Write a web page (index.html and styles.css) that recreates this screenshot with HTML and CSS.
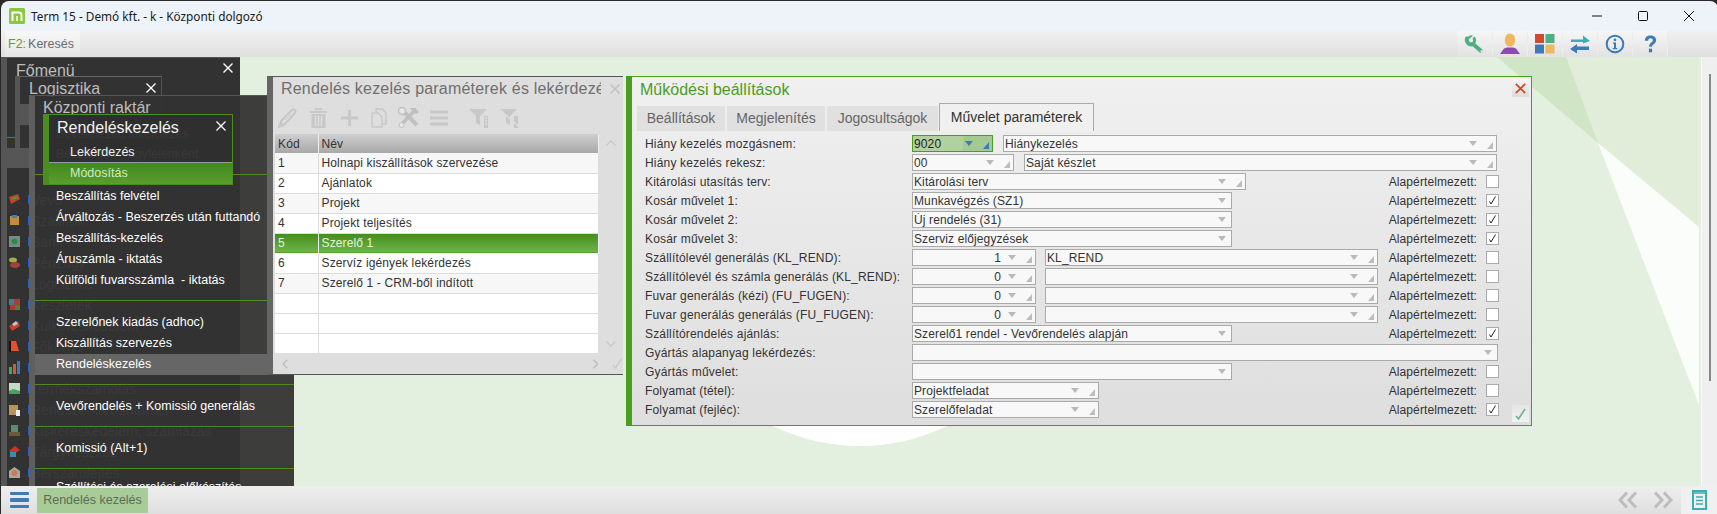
FILE: index.html
```html
<!DOCTYPE html>
<html lang="hu">
<head>
<meta charset="utf-8">
<title>Term 15 - Demó kft. - k - Központi dolgozó</title>
<link rel="stylesheet" href="styles.css">
</head>
<body>
<div class="app">
  <header class="titlebar">
    <svg class="logo" viewBox="0 0 16 16"><rect width="16" height="16" rx="1.5" fill="#8cc63f"/><path d="M3.500 13V4.500H10a2.500 2.500 0 0 1 2.500 2.500v6" fill="none" stroke="#fff" stroke-width="2"/><path d="M8 8v5" fill="none" stroke="#fff" stroke-width="1.500"/></svg>
    <span class="title-text">Term 15 - Demó kft. - k - Központi dolgozó</span>
    <div class="winbtns">
      <svg class="winbtn" viewBox="0 0 46 30"><path d="M13 15h10" stroke="#111" stroke-width="1"/></svg>
      <svg class="winbtn" viewBox="0 0 46 30"><rect x="13.5" y="10.5" width="9" height="9" rx="1" fill="none" stroke="#111"/></svg>
      <svg class="winbtn" viewBox="0 0 46 30"><path d="M13 10l10 10M23 10L13 20" stroke="#111" stroke-width="1"/></svg>
    </div>
  </header>

  <div class="toolbar">
    <div class="search"><span class="f2">F2:</span><span class="search-label">Keresés</span></div>
    <div class="tools">
      <div class="tool"><svg viewBox="0 0 22 20" width="22" height="20"><path d="M3 4.500a4.500 4.500 0 0 0 6 5.500l7.500 6.500" fill="none" stroke="#4fae84" stroke-width="4" stroke-linecap="round"/><path d="M9 1.500L6 4.500l-3 0a4.500 4.500 0 0 1 6-3z" fill="#4fae84"/><path d="M9.500 3.500a4 4 0 0 1-.5 6" fill="none" stroke="#4fae84" stroke-width="3"/><circle cx="17.500" cy="17" r="1" fill="#dff0e6"/></svg></div>
      <div class="tool"><svg viewBox="0 0 22 22" width="22" height="22"><ellipse cx="11" cy="7" rx="5.200" ry="6.600" fill="#efb75f"/><path d="M1 21l4-5.500 3-1h6l3 1 4 5.500z" fill="#8e4bae"/></svg></div>
      <div class="tool"><svg viewBox="0 0 20 20" width="20" height="20"><rect width="9" height="9" fill="#d04a2c"/><rect x="10.500" width="9" height="9" fill="#4fae84"/><rect y="10.500" width="9" height="9" fill="#3d7ab8"/><rect x="10.500" y="10.500" width="9" height="9" fill="#efb75f"/></svg></div>
      <div class="tool"><svg viewBox="0 0 22 20" width="22" height="20"><path d="M2 5.500h12V1.500l7 5.500-7 2.500V8H2z" fill="#3aaeb0"/><path d="M20 12.500H8V10l-7 5 7 4.500V16h12z" fill="#3d7ab8"/></svg></div>
      <div class="tool"><svg viewBox="0 0 20 20" width="20" height="20"><circle cx="10" cy="10" r="8.300" fill="none" stroke="#3d7ab8" stroke-width="2"/><circle cx="10" cy="5.800" r="1.400" fill="#3d7ab8"/><path d="M8 8.500h3v5.500h1.200v1.300H7.800V14H9V9.800H8z" fill="#3d7ab8"/></svg></div>
      <div class="tool"><svg viewBox="0 0 16 20" width="15" height="20"><path d="M2 6.500C2 3 4.500 1 8 1s6 2 6 5c0 4-4.500 4-4.500 7h-3c0-4.500 4-4.500 4-7 0-1.200-1-2.200-2.500-2.200S5.500 4.800 5.500 6.500z" fill="#3d7ab8"/><rect x="6.300" y="15" width="3.400" height="3.800" fill="#3d7ab8"/></svg></div>
    </div>
  </div>

  <main class="desktop">
    <svg class="wallpaper" viewBox="0 0 1699 428" preserveAspectRatio="none">
      <path d="M1566 0H1699V170L1598 86z" fill="#e1edd9"/>
      <path d="M1497 0H1566L1598 86z" fill="#cfe5c5"/>
      <path d="M1598 86L1699 170V348z" fill="#fbfdfa"/>
      <path d="M773 369a199 199 0 0 0 174 0z" fill="#ffffff"/>
    </svg>
    <div class="sidebar-strip"><div class="sidebar-thumb"></div></div>

    <!-- Főmenü -->
    <section class="menuwin win-fo">
      <div class="menuhead"><span>Főmenü</span><svg class="x" viewBox="0 0 10 10"><path d="M.5.5l9 9M9.500.5l-9 9" stroke="#fff" stroke-width="1.400"/></svg></div>
      <div class="win-fo-line"></div>
      <ul class="rootlist">
        <li><svg viewBox="0 0 13 13"><path d="M1 4l9-3 2 5-9 5z" fill="#c8402a"/><path d="M3 5l6-2 1 2-6 2z" fill="#4a9e3a"/></svg><b></b>Vevő</li>
        <li><svg viewBox="0 0 13 13"><rect x="2" y="2" width="9" height="9" fill="#c98a35"/><rect x="4" y="1" width="5" height="3" fill="#4a7fa8"/></svg><b></b>Szállítók</li>
        <li><svg viewBox="0 0 13 13"><rect x="1" y="1" width="11" height="11" fill="#7b8a88"/><circle cx="6.500" cy="6.500" r="3" fill="#2c8a48"/></svg><b></b>Bank</li>
        <li><svg viewBox="0 0 13 13"><ellipse cx="5" cy="4" rx="4" ry="2.500" fill="#a8a848"/><ellipse cx="7" cy="9" rx="5" ry="3" fill="#a84040"/></svg><b></b>Pénzügy</li>
        <li><span class="noicon"></span><b></b>Logisztika</li>
        <li><svg viewBox="0 0 13 13"><rect x="1" y="1" width="5" height="6" fill="#4a7a9a"/><rect x="6" y="1" width="6" height="6" fill="#a04040"/><rect x="2" y="7" width="5" height="5" fill="#c03030"/><rect x="7" y="7" width="5" height="5" fill="#5a7a3a"/></svg><b></b>Készletek</li>
        <li><svg viewBox="0 0 13 13"><path d="M1 7l9-5 2 5-8 5z" fill="#c8402a"/><path d="M4 5l4-3 2 3-4 2z" fill="#b8c8e0"/></svg><b></b>Külkereskedelem</li>
        <li><svg viewBox="0 0 13 13"><path d="M2 1h6l3 10H2z" fill="#e8502a"/><path d="M1 1h2v11H1z" fill="#111"/></svg><b></b>Főkönyv</li>
        <li><svg viewBox="0 0 13 13"><rect x="1" y="6" width="3" height="7" fill="#3fae5a"/><rect x="5" y="3" width="3" height="10" fill="#d05a3a"/><rect x="9" y="0" width="3" height="13" fill="#3d7ab8"/></svg><b></b>Vezetői információ</li>
        <li><svg viewBox="0 0 13 13"><rect x="1" y="1" width="11" height="11" fill="#c8d8c8"/><path d="M1 9l4-2 7 2v3H1z" fill="#4a9e5a"/></svg><b></b>Termékszámolás</li>
        <li><svg viewBox="0 0 13 13"><rect x="1" y="2" width="9" height="10" fill="#b8935a"/><rect x="8" y="7" width="4" height="6" fill="#e8eef8"/></svg><b></b>Rendszerkarbantartás</li>
        <li><svg viewBox="0 0 13 13"><rect x="3" y="1" width="7" height="7" fill="#5a8a70"/><rect x="1" y="8" width="11" height="4" fill="#6a5a3a"/></svg><b></b>Kiskereskedelem, számlázás</li>
        <li><svg viewBox="0 0 13 13"><path d="M1 6l6-5 5 4-6 4z" fill="#d03030"/><rect x="2" y="7" width="6" height="5" fill="#3d8ab8"/></svg><b></b>Tárgyi eszköz</li>
        <li><svg viewBox="0 0 13 13"><path d="M1 5l5.500-4L12 5v7H1z" fill="#a8a8a0"/><circle cx="6.500" cy="7" r="3" fill="#c87a5a"/></svg><b></b>Bérszámfejtés</li>
      </ul>
    </section>

    <!-- Logisztika -->
    <section class="menuwin win-log">
      <div class="menuhead"><span>Logisztika</span><svg class="x" viewBox="0 0 10 10"><path d="M.5.5l9 9M9.500.5l-9 9" stroke="#fff" stroke-width="1.400"/></svg></div>
    </section>
    <div class="chip-gray chip-a"></div>
    <div class="chip-gray chip-b"></div>

    <!-- Központi raktár -->
    <section class="menuwin win-kr">
      <div class="menuhead"><span>Központi raktár</span></div>
      <div class="group group-top">
        <a class="ghost">Bevételezett lekérdezés</a>
        <a class="ghost">Beszállítók - ügyfelenként</a>
      </div>
      <div class="group">
        <a>Beszállítás felvétel</a>
        <a>Árváltozás - Beszerzés után futtandó</a>
        <a>Beszállítás-kezelés</a>
        <a>Áruszámla - iktatás</a>
        <a>Külföldi fuvarsszámla&nbsp; - iktatás</a>
      </div>
      <div class="group">
        <a>Szerelőnek kiadás (adhoc)</a>
        <a>Kiszállítás szervezés</a>
        <a class="hover">Rendeléskezelés</a>
      </div>
      <div class="group"><a>Vevőrendelés + Komissió generálás</a></div>
      <div class="group"><a>Komissió (Alt+1)</a></div>
      <div class="group group-last"><a>Szállítási és szerelési előkészítés</a></div>
    </section>

    <!-- Rendeléskezelés popup -->
    <section class="popup">
      <div class="popup-head"><span>Rendeléskezelés</span><svg class="x" viewBox="0 0 10 10"><path d="M.5.5l9 9M9.500.5l-9 9" stroke="#fff" stroke-width="1.300"/></svg></div>
      <a class="popup-item">Lekérdezés</a>
      <a class="popup-item active">Módosítás</a>
    </section>

    <!-- Rendelés kezelés paraméterek -->
    <section class="listwin">
      <div class="list-head">
        <span class="list-title">Rendelés kezelés paraméterek és lekérdezés</span>
        <svg class="x list-x" viewBox="0 0 10 10"><path d="M.5.5l9 9M9.500.5l-9 9" stroke="#c4c4c4" stroke-width="1.600"/></svg>
      </div>
      <div class="list-tools">
        <svg width="19" height="20" viewBox="0 0 19 20"><path d="M1 19l2-6L14 2c2-1.500 4.500 1 3 3L6 17z" fill="none" stroke="#c8c8c8" stroke-width="2"/><path d="M1 19l2-6 3 4z" fill="#c8c8c8"/><path d="M7 12l6-6M9.500 14l5-5" stroke="#c8c8c8"/></svg>
        <svg width="19" height="20" viewBox="0 0 19 20"><path d="M1 4h17M7 2V.8h5V2" fill="none" stroke="#c8c8c8" stroke-width="2"/><path d="M2.500 6h14v14h-14z" fill="#c8c8c8"/><path d="M6.500 8v10M9.500 8v10M12.500 8v10" stroke="#dedede" stroke-width="1.500"/></svg>
        <svg width="19" height="20" viewBox="0 0 19 20"><path d="M9.500 2v16M1 10h17" stroke="#c8c8c8" stroke-width="3.200"/></svg>
        <svg width="16" height="20" viewBox="0 0 16 20"><path d="M5 4V1h6l4 4v11h-4" fill="none" stroke="#c8c8c8" stroke-width="1.500"/><path d="M1 5h6l4 4v10H1z" fill="none" stroke="#c8c8c8" stroke-width="1.500"/></svg>
        <svg class="tool-x" width="22" height="21" viewBox="0 0 22 21"><path d="M4 3l15 15" stroke="#c0c0c0" stroke-width="4"/><path d="M18 2L4 17" stroke="#c0c0c0" stroke-width="3.500"/><path d="M12 1h5l4 4-3 2-3-2z" fill="#c0c0c0"/><circle cx="4" cy="4" r="3.500" fill="#e8e8e8" stroke="#c0c0c0" stroke-width="1.500"/><circle cx="3.500" cy="18" r="2.500" fill="#e8e8e8" stroke="#c0c0c0"/></svg>
        <svg class="tool-menu" width="18" height="20" viewBox="0 0 18 20"><path d="M0 4h18M0 10h18M0 16h18" stroke="#c8c8c8" stroke-width="3"/></svg>
        <svg class="tool-f1" width="25" height="20" viewBox="0 0 25 20"><path d="M1 1h18l-7 7v9l-4-2V8z" fill="#c8c8c8"/><path d="M16 8h4v12h-4z" fill="#c8c8c8"/><path d="M17 10h2M17 13h2M17 16h2" stroke="#eee"/></svg>
        <svg class="tool-f2" width="25" height="20" viewBox="0 0 25 20"><path d="M1 1h18l-7 7v9l-4-2V8z" fill="#c8c8c8"/><path d="M16 8h4v12h-4z" fill="#c8c8c8"/><path d="M1 1l19 17" stroke="#dedede" stroke-width="1.500"/></svg>
      </div>
      <div class="list-body">
        <table class="grid">
          <thead><tr><th class="c1">Kód</th><th>Név</th></tr></thead>
          <tbody>
            <tr><td class="c1">1</td><td>Holnapi kiszállítások szervezése</td></tr>
            <tr><td class="c1">2</td><td>Ajánlatok</td></tr>
            <tr><td class="c1">3</td><td>Projekt</td></tr>
            <tr><td class="c1">4</td><td>Projekt teljesítés</td></tr>
            <tr class="sel"><td class="c1">5</td><td>Szerelő 1</td></tr>
            <tr><td class="c1">6</td><td>Szervíz igények lekérdezés</td></tr>
            <tr><td class="c1">7</td><td>Szerelő 1 - CRM-ből indított</td></tr>
            <tr><td class="c1"></td><td></td></tr>
            <tr><td class="c1"></td><td></td></tr>
            <tr><td class="c1"></td><td></td></tr>
          </tbody>
        </table>
        <div class="vscroll">
          <svg width="10" height="6" viewBox="0 0 10 6"><path d="M.5 5.500L5 1l4.500 4.500" fill="none" stroke="#c8c8c8" stroke-width="1.300"/></svg>
          <svg width="10" height="6" viewBox="0 0 10 6"><path d="M.5.5L5 5 9.500.5" fill="none" stroke="#c8c8c8" stroke-width="1.300"/></svg>
        </div>
      </div>
      <div class="list-foot">
        <svg width="6" height="10" viewBox="0 0 6 10"><path d="M5.500.5L1 5l4.500 4.500" fill="none" stroke="#bbb" stroke-width="1.300"/></svg>
        <svg class="foot-next" width="6" height="10" viewBox="0 0 6 10"><path d="M.5.5L5 5 .5 9.500" fill="none" stroke="#bbb" stroke-width="1.300"/></svg>
        <svg class="foot-ok" width="11" height="11" viewBox="0 0 11 11"><path d="M1 7l2.500 3L10 .5" fill="none" stroke="#c4c4c4" stroke-width="1.200"/></svg>
      </div>
    </section>

    <!-- Működési beállítások -->
    <section class="formwin">
      <div class="form-close"><svg width="11" height="11" viewBox="0 0 11 11"><path d="M.8.8l9.400 9.400M10.200.8L.8 10.200" stroke="#d04a2c" stroke-width="1.800"/></svg></div>
      <h2 class="form-title">Működési beállítások</h2>
      <nav class="tabs">
        <span class="tab t1">Beállítások</span>
        <span class="tab t2">Megjelenítés</span>
        <span class="tab t3">Jogosultságok</span>
        <span class="tab active">Művelet paraméterek</span>
      </nav>
      <div class="form-rows">
        <div class="row"><label>Hiány kezelés mozgásnem:</label>
          <div class="combo w81 focus"><span class="val">9020</span><i class="arr"></i><i class="grip"></i></div>
          <div class="combo w494"><span class="val">Hiánykezelés</span><i class="arr"></i><i class="grip"></i></div></div>
        <div class="row"><label>Hiány kezelés rekesz:</label>
          <div class="combo w102"><span class="val">00</span><i class="arr"></i><i class="grip"></i></div>
          <div class="combo w473"><span class="val">Saját készlet</span><i class="arr"></i><i class="grip"></i></div></div>
        <div class="row"><label>Kitárolási utasítás terv:</label>
          <div class="combo w334"><span class="val">Kitárolási terv</span><i class="arr"></i><i class="grip"></i></div>
          <div class="dflt"><span>Alapértelmezett:</span><span class="cb"></span></div></div>
        <div class="row"><label>Kosár művelet 1:</label>
          <div class="combo w320"><span class="val">Munkavégzés (SZ1)</span><i class="arr solo"></i></div>
          <div class="dflt"><span>Alapértelmezett:</span><span class="cb"><svg viewBox="0 0 11 11"><path d="M2.500 6.500l1.500 2.500L8.500 1.500" fill="none" stroke="#222" stroke-width="1"/></svg></span></div></div>
        <div class="row"><label>Kosár művelet 2:</label>
          <div class="combo w320"><span class="val">Új rendelés (31)</span><i class="arr solo"></i></div>
          <div class="dflt"><span>Alapértelmezett:</span><span class="cb"><svg viewBox="0 0 11 11"><path d="M2.500 6.500l1.500 2.500L8.500 1.500" fill="none" stroke="#222" stroke-width="1"/></svg></span></div></div>
        <div class="row"><label>Kosár művelet 3:</label>
          <div class="combo w320"><span class="val">Szerviz előjegyzések</span><i class="arr solo"></i></div>
          <div class="dflt"><span>Alapértelmezett:</span><span class="cb"><svg viewBox="0 0 11 11"><path d="M2.500 6.500l1.500 2.500L8.500 1.500" fill="none" stroke="#222" stroke-width="1"/></svg></span></div></div>
        <div class="row"><label>Szállítólevél generálás (KL_REND):</label>
          <div class="combo w124 num"><span class="val">1</span><i class="arr"></i><i class="grip"></i></div>
          <div class="combo w333 g9"><span class="val">KL_REND</span><i class="arr"></i><i class="grip"></i></div>
          <div class="dflt"><span>Alapértelmezett:</span><span class="cb"></span></div></div>
        <div class="row"><label>Szállítólevél és számla generálás (KL_REND):</label>
          <div class="combo w124 num"><span class="val">0</span><i class="arr"></i><i class="grip"></i></div>
          <div class="combo w333 g9"><span class="val"></span><i class="arr"></i><i class="grip"></i></div>
          <div class="dflt"><span>Alapértelmezett:</span><span class="cb"></span></div></div>
        <div class="row"><label>Fuvar generálás (kézi) (FU_FUGEN):</label>
          <div class="combo w124 num"><span class="val">0</span><i class="arr"></i><i class="grip"></i></div>
          <div class="combo w333 g9"><span class="val"></span><i class="arr"></i><i class="grip"></i></div>
          <div class="dflt"><span>Alapértelmezett:</span><span class="cb"></span></div></div>
        <div class="row"><label>Fuvar generálás generálás (FU_FUGEN):</label>
          <div class="combo w124 num"><span class="val">0</span><i class="arr"></i><i class="grip"></i></div>
          <div class="combo w333 g9"><span class="val"></span><i class="arr"></i><i class="grip"></i></div>
          <div class="dflt"><span>Alapértelmezett:</span><span class="cb"></span></div></div>
        <div class="row"><label>Szállítórendelés ajánlás:</label>
          <div class="combo w320"><span class="val">Szerelő1 rendel - Vevőrendelés alapján</span><i class="arr solo"></i></div>
          <div class="dflt"><span>Alapértelmezett:</span><span class="cb"><svg viewBox="0 0 11 11"><path d="M2.500 6.500l1.500 2.500L8.500 1.500" fill="none" stroke="#222" stroke-width="1"/></svg></span></div></div>
        <div class="row"><label>Gyártás alapanyag lekérdezés:</label>
          <div class="combo w586"><span class="val"></span><i class="arr solo"></i></div></div>
        <div class="row"><label>Gyártás művelet:</label>
          <div class="combo w320"><span class="val"></span><i class="arr solo"></i></div>
          <div class="dflt"><span>Alapértelmezett:</span><span class="cb"></span></div></div>
        <div class="row"><label>Folyamat (tétel):</label>
          <div class="combo w187"><span class="val">Projektfeladat</span><i class="arr"></i><i class="grip"></i></div>
          <div class="dflt"><span>Alapértelmezett:</span><span class="cb"></span></div></div>
        <div class="row"><label>Folyamat (fejléc):</label>
          <div class="combo w187"><span class="val">Szerelőfeladat</span><i class="arr"></i><i class="grip"></i></div>
          <div class="dflt"><span>Alapértelmezett:</span><span class="cb"><svg viewBox="0 0 11 11"><path d="M2.500 6.500l1.500 2.500L8.500 1.500" fill="none" stroke="#222" stroke-width="1"/></svg></span></div></div>
      </div>
      <div class="form-ok"><svg width="11" height="12" viewBox="0 0 11 12"><path d="M1 8l2.500 3L10 1" fill="none" stroke="#5fb58d" stroke-width="1.500"/></svg></div>
    </section>
  </main>

  <footer class="statusbar">
    <div class="burger"><i></i><i></i><i></i></div>
    <div class="task">Rendelés kezelés</div>
    <div class="nav">
      <svg width="20" height="18" viewBox="0 0 20 18"><path d="M9 1.500L2 9l7 7.500M18 1.500L11 9l7 7.500" fill="none" stroke="#bdbdbd" stroke-width="3"/></svg>
      <svg width="20" height="18" viewBox="0 0 20 18"><path d="M2 1.500L9 9l-7 7.500M11 1.500L18 9l-7 7.500" fill="none" stroke="#bdbdbd" stroke-width="3"/></svg>
    </div>
    <div class="doc"><svg width="15" height="20" viewBox="0 0 15 20"><rect x="1" y="1" width="13" height="18" fill="none" stroke="#3aaeb0" stroke-width="2"/><path d="M0 3h15M4 7h7M4 10.500h7M4 14h7" stroke="#3aaeb0" stroke-width="1.500"/></svg></div>
  </footer>
</div>
</body>
</html>
```
FILE: styles.css
```css
* { box-sizing: border-box; }
html, body { margin: 0; height: 100%; overflow: hidden; background: #2a2a2a; }
body { font-family: "Liberation Sans", Arial, sans-serif; font-size: 12px; color: #333; }
.app { width: 1717px; height: 513px; display: flex; flex-direction: column; border-radius: 8px 8px 0 0; overflow: hidden; margin-left: 1px; margin-top: 1px; }
.x { width: 10px; height: 10px; display: block; }

/* title bar */
.titlebar { height: 30px; background: #eef2f9; display: flex; align-items: center; padding-left: 8px; flex: none; }
.logo { width: 16px; height: 16px; }
.title-text { font-family: "Noto Sans", sans-serif; font-size: 11.8px; color: #1a1a1a; margin-left: 6px; }
.winbtns { margin-left: auto; display: flex; margin-right: 1px; }
.winbtn { width: 46px; height: 30px; display: block; }

/* toolbar */
.toolbar { height: 26px; flex: none; display: flex; justify-content: space-between; background: linear-gradient(#f0f0f0, #dfdfdf); }
.search { margin-left: 4px; width: 75px; display: flex; align-items: center; padding-left: 3px; gap: 2px; background: linear-gradient(#f7f7f7, #e6e6e6); font-size: 12.5px; }
.f2 { color: #75933a; }
.search-label { color: #6c6c6c; }
.tools { display: flex; margin-right: 50px; }
.tool { width: 35px; display: flex; align-items: center; justify-content: center; background: linear-gradient(#f6f6f6, #e2e2e2); border-right: 1px solid #ececec; }

/* desktop */
.desktop { flex: 1; position: relative; background: #e4f0df; overflow: hidden; }
.wallpaper { position: absolute; left: -1px; top: 0; width: 1699px; height: 428px; }
.sidebar-strip { position: absolute; right: 0; top: 0; bottom: 0; width: 17px; background: #efefef; border-left: 1px solid #fbfbfb; padding: 17px 0 0 7px; }
.sidebar-thumb { width: 2px; height: 307px; background: #888; }

/* stacked dark menu windows */
.menuwin { position: absolute; color: #fff; overflow: hidden; }
.menuhead { display: flex; justify-content: space-between; font-size: 16px; color: #bdbdbd; white-space: nowrap; }
.win-fo { left: -1px; top: 0; bottom: 0; width: 240px; background: #323232; border-left: 7px solid #555; border-top: 1px solid #555; }
.win-fo .menuhead { padding: 4px 7px 0 9px; height: 19px; }
.win-fo .menuhead .x { margin-top: 1px; }
.win-fo-line { position: absolute; left: 0; top: 79px; width: 8px; border-top: 1px solid #4a8a20; }
.rootlist { list-style: none; margin: 112px 0 0; padding: 0; }
.rootlist li { height: 21px; display: flex; align-items: center; font-size: 14px; color: #b4b4b4; white-space: nowrap; }
.rootlist svg, .noicon { width: 13px; height: 13px; margin-left: 1px; flex: none; }
.rootlist b { width: 2px; height: 9px; background: #2c5fbf; margin-left: 7px; margin-right: 1px; flex: none; }
.win-log { left: 14px; top: 19px; width: 147px; height: 92px; background: #323232; border-left: 5px solid #555; border-top: 1px solid #666; border-right: 1px solid #555; }
.win-log .menuhead { padding: 3px 5px 0 9px; }
.win-log .menuhead .x { margin-top: 3px; }
.chip-gray { position: absolute; background: #565656; }
.chip-a { left: 19px; top: 47px; width: 10px; height: 21px; }
.chip-b { left: 6px; top: 91px; width: 23px; height: 20px; }
.win-kr { left: 28px; top: 38px; bottom: -10px; width: 265px; background: rgba(50, 50, 50, .94); border-left: 6px solid #5f5f5f; border-top: 1px solid #555; }
.win-kr .menuhead { padding: 3px 0 0 8px; height: 19px; }
.group { padding: 11px 0 9px; border-bottom: 1px solid #4f8a22; }
.group-top { height: 60px; padding: 9px 0 0; }
.group-last { padding-top: 8px; }
.group a { display: block; height: 21px; line-height: 21px; padding-left: 21px; font-size: 12.5px; color: #fff; white-space: nowrap; }
.group a.ghost { height: 20px; line-height: 20px; }
.group a.hover { background: #666; }

.popup { position: absolute; left: 42px; top: 57px; width: 190px; height: 71px; background: rgba(47, 47, 47, .96); border: 1px solid #4a8f1e; border-left-width: 6px; color: #fff; display: flex; flex-direction: column; }
.popup-head { display: flex; justify-content: space-between; padding: 4px 6px 0 8px; font-size: 16px; height: 27px; color: #f2f2f2; }
.popup-head .x { margin-top: 2px; }
.popup-item { display: block; height: 21px; line-height: 21px; padding-left: 21px; font-size: 12.5px; color: #f2f2f2; }
.popup-item.active { height: 22px; background: linear-gradient(#3f8a1a, #5a9e30); color: #d5e9cb; border-top: 1px solid #9a9a9a; margin-top: -1px; }

/* list window */
.listwin { position: absolute; left: 266px; top: 19px; width: 356px; height: 299px; background: #dedede; border-left: 6px solid #666; border-top: 1px solid #555; border-bottom: 1px solid #555; display: flex; flex-direction: column; }
.list-head { height: 24px; padding: 0 0 0 8px; display: flex; align-items: center; flex: none; }
.list-title { width: 320px; overflow: hidden; white-space: nowrap; font-size: 16px; color: #6f6f6f; letter-spacing: .2px; }
.list-x { margin-left: 9px; }
.list-tools { height: 33px; flex: none; display: flex; align-items: center; padding: 0 0 0 5px; gap: 12px; }
.tool-x { margin-left: -1px; }
.tool-menu { margin-left: -2px; }
.tool-f1 { margin-left: 8px; }
.tool-f2 { margin-left: -7px; }
.list-body { display: flex; flex: none; padding-left: 2px; }
.grid { border-collapse: collapse; table-layout: fixed; width: 330px; font-size: 12px; letter-spacing: .13px; color: #333; }
.grid th { height: 19px; padding: 0 0 0 3px; text-align: left; font-weight: normal; background: linear-gradient(#cfcfcf, #a8a8a8); border-right: 1px solid #eee; }
.grid td { height: 20px; padding: 0 0 0 3px; background: #fff; border-bottom: 1px solid #dcdcdc; border-right: 1px solid #dcdcdc; }
.grid tbody tr:nth-child(odd) td { background: #f7f7f7; }
.grid tbody tr:nth-child(n+8) td { background: #fff; }
.grid tr.sel td { background: linear-gradient(#3f8f1b, #72b24c) !important; color: #e8f4e0; border-color: #eee; }
.c1 { width: 43px; }
.vscroll { width: 26px; display: flex; flex-direction: column; justify-content: space-between; align-items: center; padding: 6px 0 6px 2px; height: 219px; margin-left: -2px; }
.list-foot { flex: 1; display: flex; align-items: center; padding-left: 9px; }
.foot-next { margin-left: 305px; }
.foot-ok { margin-left: 14px; }

/* form window */
.formwin { position: absolute; left: 625px; top: 19px; width: 906px; height: 350px; background: linear-gradient(#f0f0f0, #dedede); border: 1px solid #4a9e1e; border-left-width: 6px; padding-top: 4px; }
.form-close { position: absolute; right: 2px; top: 2px; width: 17px; height: 18px; display: flex; align-items: center; justify-content: center; background: linear-gradient(#f4f4f4, #dcdcdc); }
.form-title { margin: 0 0 0 8px; font-size: 16px; font-weight: normal; color: #4a9e1e; line-height: 18px; }
.tabs { display: flex; margin: 4px 0 0 5px; height: 28px; align-items: flex-end; }
.tab { height: 25px; line-height: 25px; background: #e0e0e0; color: #666; font-size: 14px; text-align: center; margin-right: 2px; flex: none; }
.t1 { width: 88px; }
.t2 { width: 98px; }
.t3 { width: 111px; margin-right: 1px; }
.tab.active { height: 28px; width: 155px; line-height: 26px; background: #f0f0f0; color: #333; border: 1px solid #aaa; border-bottom: 0; }
.form-rows { margin: 4px 0 0 13px; width: 854px; display: flex; flex-direction: column; gap: 2px; }
.row { height: 17px; display: flex; align-items: center; white-space: nowrap; }
.row label { width: 267px; flex: none; font-size: 12px; letter-spacing: .18px; color: #333; }
.combo { height: 17px; flex: none; display: flex; align-items: center; background: #f8f8f8; border: 1px solid #aaa; padding: 0 2px 0 1px; font-size: 12px; letter-spacing: .12px; color: #333; margin-right: 10px; }
.val { flex: 1; min-width: 0; overflow: hidden; }
.num .val { text-align: right; padding-right: 7px; }
.arr { width: 0; height: 0; border: 4px solid transparent; border-top: 5px solid #b9b9b9; border-bottom: 0; flex: none; }
.arr.solo { margin-right: 3px; }
.grip { width: 0; height: 0; border-left: 6px solid transparent; border-bottom: 7px solid #bdbdbd; margin-left: 10px; flex: none; margin-right: 1px; margin-top: 3px; }
.focus { background: linear-gradient(90deg, #b1d19f 63%, #a5c992 63%); border-color: #4a9e1e; color: #222; }
.focus .arr { border-top-color: #3d7ab8; }
.focus .grip { border-bottom-color: #3d7ab8; }
.g9 { margin-left: -1px; }
.w81 { width: 81px; }
.w102 { width: 102px; }
.w124 { width: 124px; }
.w187 { width: 187px; }
.w320 { width: 320px; }
.w333 { width: 333px; }
.w334 { width: 334px; }
.w473 { width: 473px; margin-right: 0; }
.w494 { width: 494px; margin-right: 0; }
.w586 { width: 586px; margin-right: 0; }
.dflt { margin-left: auto; display: flex; align-items: center; letter-spacing: .1px; }
.dflt span:first-child { margin-right: 9px; }
.cb { width: 13px; height: 13px; border: 1px solid #aaa; background: #fff; display: block; }
.cb svg { display: block; width: 11px; height: 11px; }
.form-ok { position: absolute; right: 2px; bottom: 3px; width: 17px; height: 17px; display: flex; align-items: center; justify-content: center; background: linear-gradient(#e6e6e6, #f1f1f1); }

/* status bar */
.statusbar { height: 28px; flex: none; display: flex; align-items: stretch; background: linear-gradient(#eee, #dfdfdf); position: relative; z-index: 2; }
.burger { width: 36px; display: flex; flex-direction: column; justify-content: center; gap: 3px; padding-left: 9px; }
.burger i { display: block; width: 19px; height: 3.5px; background: #3d7ab8; border-radius: 1px; }
.task { width: 111px; margin: 2px 0 1px; background: #a8cc98; color: #5d6b57; font-size: 12.5px; line-height: 24px; text-align: center; }
.nav { margin-left: auto; display: flex; align-items: center; gap: 15px; }
.doc { width: 37px; margin-left: 8px; display: flex; align-items: center; justify-content: center; background: #f0f0f0; }
```
